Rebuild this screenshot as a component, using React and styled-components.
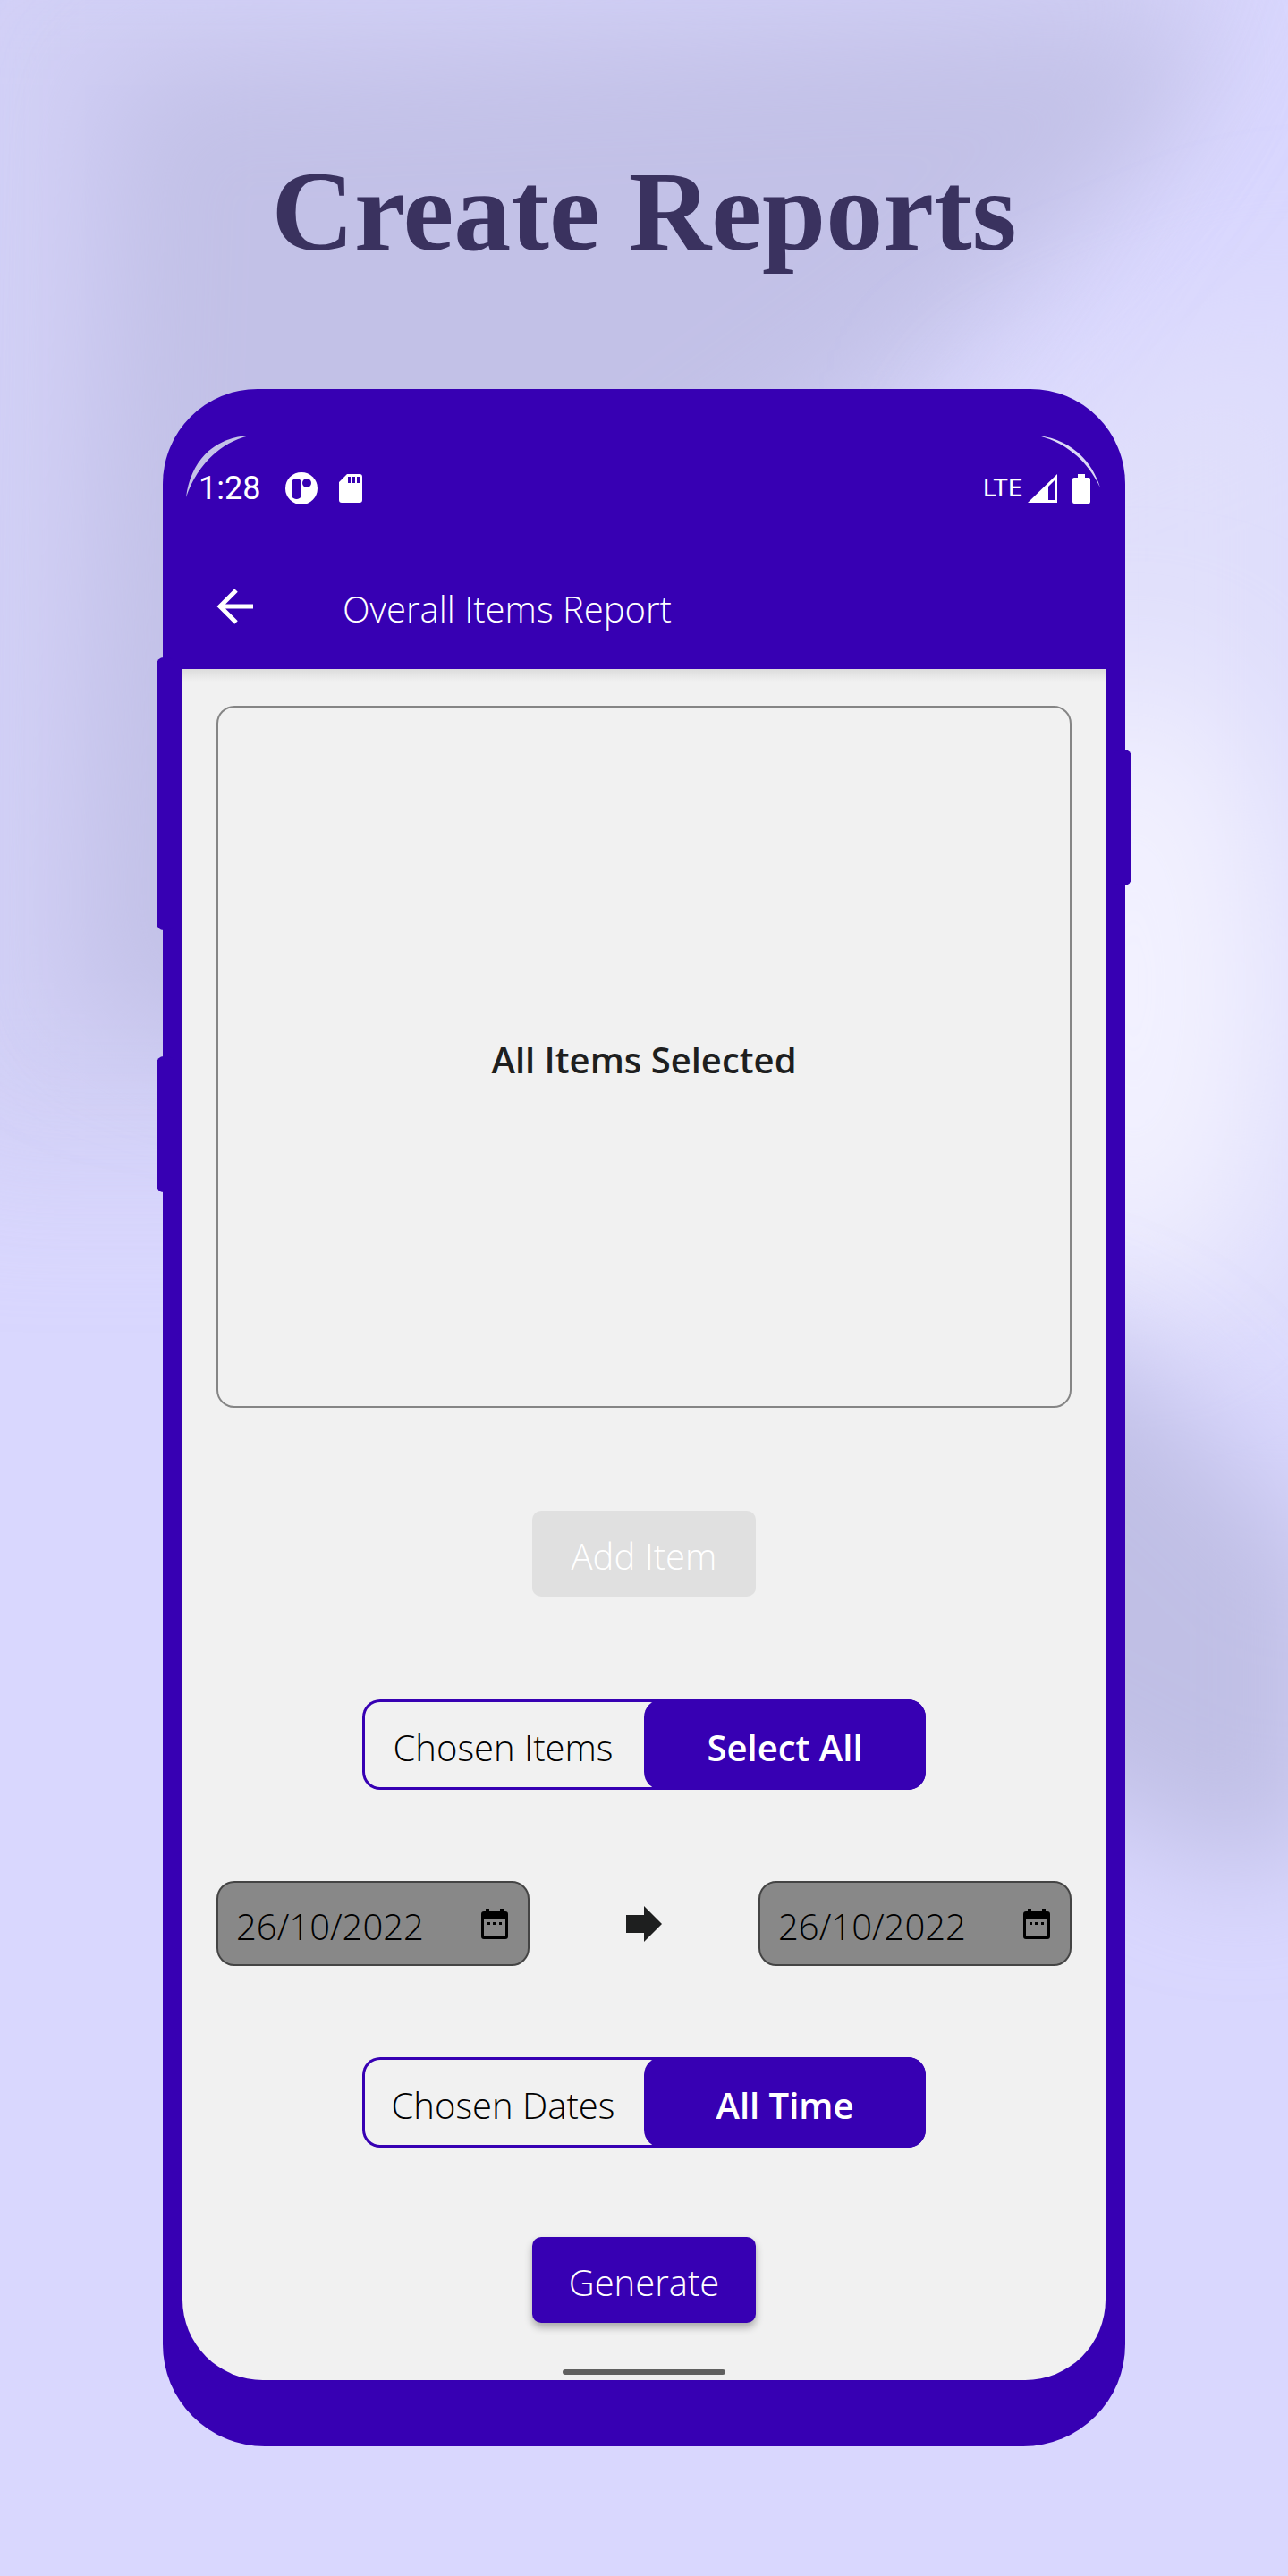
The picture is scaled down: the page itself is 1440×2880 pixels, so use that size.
import React, { useState } from "react";
import styled, { createGlobalStyle, css } from "styled-components";

const violet = "#3700b3";
const paper = "#f1f1f1";
const ink = "#1e1f1f";

const GlobalStyle = createGlobalStyle`
  *, *::before, *::after { box-sizing: border-box; }
  body { margin: 0; background: #d9d7fe; }
  button, input { font: inherit; color: inherit; }
`;

const Page = styled.main`
  position: relative;
  isolation: isolate;
  min-height: 100vh;
  padding: 156px 24px 145px;
  display: flex;
  flex-direction: column;
  align-items: center;
  overflow: hidden;
  font-family: "Open Sans", Lato, sans-serif;
  font-size: 40px;
  font-weight: 300;
  line-height: 48px;
`;

const BackdropArt = styled.svg`
  position: absolute;
  inset: 0;
  width: 100%;
  height: 100%;
  z-index: -1;
`;

const Headline = styled.h1`
  margin: 0 0 119px;
  font-family: "Liberation Serif", "Times New Roman", serif;
  font-size: 128px;
  font-weight: 700;
  line-height: 160px;
  text-align: center;
  color: #3a325f;
`;

const Phone = styled.section`
  position: relative;
  width: 100%;
  max-width: 1076px;
  padding: 0 22px 74px;
  border-radius: 106px 106px 114px 114px;
  background: ${violet};
`;

const SideKey = styled.span`
  position: absolute;
  top: ${(p) => p.$top}px;
  ${(p) => p.$side}: -7px;
  width: 20px;
  height: ${(p) => p.$length}px;
  border-radius: 8px;
  background: ${violet};
`;

const CornerGlint = styled.svg`
  position: absolute;
  top: 50px;
  ${(p) => p.$side}: 25px;
  width: 76px;
  height: 74px;
`;

const StatusBar = styled.div`
  display: flex;
  justify-content: space-between;
  align-items: center;
  padding: 72px 17px 0 18px;
  height: 150px;
  color: #fff;
  font-family: Roboto, sans-serif;
  font-weight: 400;
`;

const StatusGroup = styled.div`
  display: flex;
  align-items: center;
  gap: ${(p) => p.$gap}px;
`;

const Clock = styled.time`
  font-size: 36px;
  margin-right: 4px;
`;

const Network = styled.span`
  font-family: "Liberation Sans Narrow", Roboto, sans-serif;
  font-size: 28px;
`;

const BatteryIcon = styled.svg`
  margin-left: 11px;
`;

const AppBar = styled.header`
  display: flex;
  align-items: center;
  gap: 100px;
  height: 163px;
  padding: 22px 38px 0;
  color: #fff;
`;

const IconButton = styled.button`
  display: flex;
  padding: 0;
  border: 0;
  background: none;
  cursor: pointer;
`;

const ScreenTitle = styled.h2`
  margin: 0;
  padding-top: 6px;
  font-size: 40px;
  font-weight: 300;
`;

const Screen = styled.div`
  display: flex;
  flex-direction: column;
  align-items: center;
  padding: 41px 38px 6px;
  border-radius: 0 0 90px 90px;
  background: linear-gradient(#dcdcdc, ${paper} 14px);
`;

const ItemsPanel = styled.div`
  display: flex;
  align-items: center;
  justify-content: center;
  width: 100%;
  height: 785px;
  margin-bottom: 115px;
  padding-top: 6px;
  border: 2px solid #858585;
  border-radius: 20px;
  color: ${ink};
  font-weight: 600;
`;

const ActionButton = styled.button`
  height: 96px;
  min-width: 250px;
  padding: 6px 40px 0;
  border: 0;
  border-radius: 10px;
  background: ${violet};
  color: #fff;
  box-shadow: 0 5px 8px rgba(0, 0, 0, 0.3);
  cursor: pointer;

  &:disabled {
    background: #e0e0e0;
    box-shadow: none;
    cursor: default;
  }
`;

const Segments = styled.fieldset`
  display: grid;
  grid-template-columns: 1fr 1fr;
  width: 100%;
  max-width: 630px;
  margin: ${(p) => p.$before}px 0 ${(p) => p.$after}px;
  padding: 0;
  border: 0;
  border-radius: 20px;
  box-shadow: inset 0 0 0 3px ${violet};
`;

const Segment = styled.label`
  display: flex;
  align-items: center;
  justify-content: center;
  height: 101px;
  padding-top: 6px;
  border-radius: 20px;
  color: #000;
  cursor: pointer;
  ${(p) =>
    p.$on &&
    css`
      background: ${violet};
      color: #fff;
      font-weight: 600;
    `}
`;

const HiddenRadio = styled.input`
  position: absolute;
  opacity: 0;
  pointer-events: none;
`;

const DateRow = styled.div`
  display: flex;
  align-items: center;
  justify-content: space-between;
  width: 100%;
`;

const DateBox = styled.label`
  display: flex;
  align-items: center;
  justify-content: space-between;
  width: 350px;
  height: 95px;
  padding: 0 22px 0 20px;
  border: 2px solid #444;
  border-radius: 20px;
  background: #888;
  color: #000;
`;

const DateInput = styled.input`
  width: 240px;
  height: 60px;
  padding: 6px 0 0;
  border: 0;
  outline: 0;
  background: none;
`;

const HomeBar = styled.div`
  width: 182px;
  height: 6px;
  margin-top: 52px;
  border-radius: 3px;
  background: #606060;
`;

function Backdrop() {
  return (
    <BackdropArt viewBox="0 0 784 1568" preserveAspectRatio="none" aria-hidden="true">
      <defs>
        <filter id="soft" x="-50%" y="-50%" width="200%" height="200%">
          <feGaussianBlur stdDeviation="36" />
        </filter>
        <filter id="wide" x="-100%" y="-50%" width="300%" height="200%">
          <feGaussianBlur stdDeviation="46" />
        </filter>
      </defs>
      <rect width="784" height="1568" fill="#d9d7fe" />
      <path d="M-60 -60 H760 L600 200 L200 710 H-60 Z" fill="#cfcdf3" opacity="0.8" filter="url(#wide)" />
      <path d="M70 40 L740 10 L710 80 L570 205 L300 400 L200 650 L50 620 Z" fill="#c2c1e7" filter="url(#soft)" />
      <path d="M820 170 L600 260 L600 760 L820 840 Z" fill="#e0dffb" filter="url(#wide)" />
      <ellipse cx="690" cy="600" rx="85" ry="190" fill="#f3f2ff" filter="url(#wide)" />
      <path d="M600 800 L690 835 L810 950 L810 1120 L750 1140 L600 1060 Z" fill="#c0bfe5" filter="url(#soft)" />
    </BackdropArt>
  );
}

function CalendarIcon() {
  return (
    <svg width="30" height="34" viewBox="0 0 30 34" aria-hidden="true">
      <path
        fillRule="evenodd"
        d="M5 0h4v3h12V0h4v3h2a3 3 0 0 1 3 3v25a3 3 0 0 1-3 3H3a3 3 0 0 1-3-3V6a3 3 0 0 1 3-3h2ZM3 12v19h24V12Z"
      />
      <path d="M7 15h3v3H7zM13 15h4v3h-4zM20 15h3v3h-3z" />
    </svg>
  );
}

function DateField({ name, value }) {
  return (
    <DateBox>
      <DateInput type="text" aria-label={name} defaultValue={value} readOnly />
      <CalendarIcon />
    </DateBox>
  );
}

function Toggle({ name, options, before, after }) {
  const [picked, setPicked] = useState(options[1]);
  return (
    <Segments $before={before} $after={after} aria-label={name}>
      {options.map((option) => (
        <Segment key={option} $on={option === picked}>
          <HiddenRadio
            type="radio"
            name={name}
            checked={option === picked}
            onChange={() => setPicked(option)}
          />
          {option}
        </Segment>
      ))}
    </Segments>
  );
}

export default function App() {
  return (
    <Page>
      <GlobalStyle />
      <Backdrop />
      <Headline>Create Reports</Headline>
      <Phone>
        <SideKey $side="left" $top={300} $length={305} />
        <SideKey $side="left" $top={746} $length={152} />
        <SideKey $side="right" $top={403} $length={152} />
        <CornerGlint $side="left" viewBox="0 0 76 74" aria-hidden="true">
          <path d="M1 71C6 31 31 4 72 2C40 9 13 35 1 71Z" fill="#c4c3e8" />
        </CornerGlint>
        <CornerGlint $side="right" viewBox="0 0 76 74" aria-hidden="true">
          <path d="M4 2C38 6 63 28 73 60C59 31 37 11 4 2Z" fill="#dcdaf7" />
        </CornerGlint>

        <StatusBar>
          <StatusGroup $gap={24}>
            <Clock>1:28</Clock>
            <svg width="36" height="36" viewBox="0 0 36 36" aria-hidden="true">
              <circle cx="18" cy="18" r="18" fill="#fff" />
              <rect x="7" y="7" width="11" height="23" rx="5" fill={violet} />
              <circle cx="24" cy="12" r="5" fill={violet} />
            </svg>
            <svg width="26" height="32" viewBox="0 0 26 32" aria-hidden="true">
              <path
                fill="#fff"
                fillRule="evenodd"
                d="M9 0h14a3 3 0 0 1 3 3v26a3 3 0 0 1-3 3H3a3 3 0 0 1-3-3V9ZM10 3v7h3V3ZM15 3v7h3V3ZM20 3v7h3V3Z"
              />
            </svg>
          </StatusGroup>
          <StatusGroup $gap={6}>
            <Network>LTE</Network>
            <svg width="33" height="32" viewBox="0 0 33 32" aria-hidden="true">
              <path fill="#fff" fillRule="evenodd" d="M33 0v32H0ZM30 7l-7 7v15h7Z" />
            </svg>
            <BatteryIcon width="20" height="33" viewBox="0 0 20 33" aria-hidden="true">
              <path
                fill="#fff"
                d="M6 0h8v4h4a2 2 0 0 1 2 2v25a2 2 0 0 1-2 2H2a2 2 0 0 1-2-2V6a2 2 0 0 1 2-2h4Z"
              />
            </BatteryIcon>
          </StatusGroup>
        </StatusBar>

        <AppBar>
          <IconButton type="button" aria-label="Back">
            <svg width="41" height="40" viewBox="0 0 41 40" aria-hidden="true">
              <path d="M41 20H4M22 2L4 20l18 18" fill="none" stroke="#fff" strokeWidth="5" />
            </svg>
          </IconButton>
          <ScreenTitle>Overall Items Report</ScreenTitle>
        </AppBar>

        <Screen>
          <ItemsPanel>All Items Selected</ItemsPanel>
          <ActionButton type="button" disabled>
            Add Item
          </ActionButton>
          <Toggle name="Items" options={["Chosen Items", "Select All"]} before={115} after={102} />
          <DateRow>
            <DateField name="Start date" value="26/10/2022" />
            <svg width="40" height="40" viewBox="0 0 40 40" aria-hidden="true">
              <path d="M0 10h20V0l20 20-20 20V30H0Z" fill={ink} />
            </svg>
            <DateField name="End date" value="26/10/2022" />
          </DateRow>
          <Toggle name="Dates" options={["Chosen Dates", "All Time"]} before={102} after={100} />
          <ActionButton type="button">Generate</ActionButton>
          <HomeBar />
        </Screen>
      </Phone>
    </Page>
  );
}
